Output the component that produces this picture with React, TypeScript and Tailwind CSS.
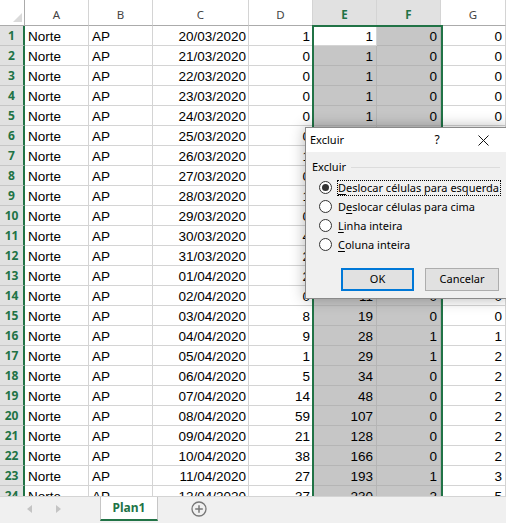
import React from "react";

type RowData = [string, number, number, number, number];

const data: RowData[] = [
  ["20/03/2020", 1, 1, 0, 0],
  ["21/03/2020", 0, 1, 0, 0],
  ["22/03/2020", 0, 1, 0, 0],
  ["23/03/2020", 0, 1, 0, 0],
  ["24/03/2020", 0, 1, 0, 0],
  ["25/03/2020", 0, 1, 0, 0],
  ["26/03/2020", 1, 2, 0, 0],
  ["27/03/2020", 0, 2, 0, 0],
  ["28/03/2020", 1, 3, 0, 0],
  ["29/03/2020", 0, 3, 0, 0],
  ["30/03/2020", 4, 7, 0, 0],
  ["31/03/2020", 2, 9, 0, 0],
  ["01/04/2020", 2, 11, 0, 0],
  ["02/04/2020", 0, 11, 0, 0],
  ["03/04/2020", 8, 19, 0, 0],
  ["04/04/2020", 9, 28, 1, 1],
  ["05/04/2020", 1, 29, 1, 2],
  ["06/04/2020", 5, 34, 0, 2],
  ["07/04/2020", 14, 48, 0, 2],
  ["08/04/2020", 59, 107, 0, 2],
  ["09/04/2020", 21, 128, 0, 2],
  ["10/04/2020", 38, 166, 0, 2],
  ["11/04/2020", 27, 193, 1, 3],
  ["12/04/2020", 37, 230, 2, 5],
];

const cell =
  "flex shrink-0 h-full items-start pt-[3px] leading-[16px] border-r border-b whitespace-nowrap overflow-hidden";
const plain = "bg-white border-[#d4d4d4]";
const picked = "bg-[#c6c6c6] border-[#b5b5b5]";

function SheetRow({ n, row }: { n: number; row: RowData }) {
  const [date, d, e, f, g] = row;
  return (
    <div className="flex h-[20px]">
      <div className="flex w-[25px] shrink-0 items-center justify-center border-b border-b-[#c6c6c6] border-r-2 border-r-[#217346] bg-[#e1e1e1] font-['Noto_Sans'] text-[12px] font-bold text-[#217346]">
        {n}
      </div>
      <div className={`${cell} ${plain} w-[64px] pl-[3px]`}>Norte</div>
      <div className={`${cell} ${plain} w-[64px] pl-[3px]`}>AP</div>
      <div className={`${cell} ${plain} w-[96px] justify-end pr-[2px]`}>{date}</div>
      <div className={`${cell} ${plain} w-[64px] justify-end pr-[2px]`}>{d}</div>
      <div className={`${cell} ${n === 1 ? plain : picked} w-[64px] justify-end pr-[3px]`}>{e}</div>
      <div className={`${cell} ${picked} w-[64px] justify-end pr-[3px]`}>{f}</div>
      <div className={`${cell} ${plain} w-[65px] justify-end pr-[3px]`}>{g}</div>
    </div>
  );
}

function HeaderRow() {
  const head =
    "flex shrink-0 h-full items-center justify-center pt-[5px] border-r border-b border-r-[#d4d4d4] border-b-[#ababab] font-['Noto_Sans'] text-[11.5px]";
  return (
    <div className="flex h-[26px]">
      <div className="relative w-[25px] shrink-0 border-b border-r border-[#ababab] bg-white">
        <svg className="absolute bottom-[3px] right-[2px]" width="9" height="9" viewBox="0 0 9 9">
          <polygon points="9,0 9,9 0,9" fill="#dadada" />
        </svg>
      </div>
      <div className={`${head} w-[64px] bg-white text-[#444]`}>A</div>
      <div className={`${head} w-[64px] bg-white text-[#444]`}>B</div>
      <div className={`${head} w-[96px] bg-white text-[#444]`}>C</div>
      <div className={`${head} w-[64px] bg-white text-[#444]`}>D</div>
      <div className={`${head} w-[64px] bg-[#e1e1e1] font-bold text-[#217346]`}>E</div>
      <div className={`${head} w-[64px] bg-[#e1e1e1] font-bold text-[#217346]`}>F</div>
      <div className={`${head} w-[65px] bg-white text-[#444]`}>G</div>
    </div>
  );
}

function Radio({ checked, children, focus }: { checked?: boolean; children: React.ReactNode; focus?: boolean }) {
  return (
    <div className="flex h-[19px] items-center whitespace-nowrap pl-[7px]">
      <span className="flex h-[13px] w-[13px] shrink-0 items-center justify-center rounded-full border border-[#333] bg-white">
        {checked && <span className="h-[7px] w-[7px] rounded-full bg-[#333]" />}
      </span>
      <span
        className={`ml-[5px] shrink-0 border pr-px leading-[14px] ${
          focus ? "border-dotted border-black" : "border-transparent"
        }`}
      >
        {children}
      </span>
    </div>
  );
}

function Dialog() {
  return (
    <div className="absolute left-[305px] top-[127px] h-[172px] w-[202px] border border-[#8a8a8a] bg-[#f0f0f0] font-['Noto_Sans'] text-[11px] text-black shadow-[0_0_14px_rgba(0,0,0,0.3)]">
      <div className="flex h-[24px] items-center bg-white">
        <span className="flex-1 pl-[4px]">Excluir</span>
        <span className="flex w-[46px] justify-center text-[12px]">?</span>
        <span className="flex w-[46px] justify-center">
          <svg width="11" height="11" viewBox="0 0 11 11">
            <path d="M0.5 0.5 L10.5 10.5 M10.5 0.5 L0.5 10.5" stroke="#111" strokeWidth="1" />
          </svg>
        </span>
      </div>
      <div className="px-[6px] pt-[8px]">
        <div className="flex h-[14px] items-center">
          <span>Excluir</span>
          <span className="ml-[5px] h-px flex-1 bg-[#dcdcdc]" />
        </div>
        <div className="mt-[4px]">
          <Radio checked focus>
            <span className="underline underline-offset-[2px]">D</span>eslocar células para esquerda
          </Radio>
          <Radio>
            D<span className="underline underline-offset-[2px]">e</span>slocar células para cima
          </Radio>
          <Radio>
            <span className="underline underline-offset-[2px]">L</span>inha inteira
          </Radio>
          <Radio>
            <span className="underline underline-offset-[2px]">C</span>oluna inteira
          </Radio>
        </div>
        <div className="mt-[14px] flex">
          <button className="ml-[29px] h-[23px] w-[73px] border-2 border-[#0078d7] bg-[#e1e1e1]">OK</button>
          <button className="ml-[11px] h-[23px] w-[74px] border border-[#adadad] bg-[#e1e1e1]">Cancelar</button>
        </div>
      </div>
    </div>
  );
}

function TabBar() {
  return (
    <div className="flex h-[27px] items-start border-t border-[#d4d4d4] bg-[#f0f0f0]">
      <div className="flex h-[24px] w-[100px] items-center">
        <svg className="ml-[27px]" width="5" height="8" viewBox="0 0 5 8">
          <polygon points="5,0 5,8 0,4" fill="#c4c4c4" />
        </svg>
        <svg className="ml-[24px]" width="5" height="8" viewBox="0 0 5 8">
          <polygon points="0,0 0,8 5,4" fill="#c4c4c4" />
        </svg>
      </div>
      <div className="flex h-[24px] w-[58px] items-center justify-center border-x border-b-2 border-x-[#c6c6c6] border-b-[#217346] bg-white font-['Noto_Sans'] text-[12px] font-bold text-[#217346]">
        Plan1
      </div>
      <div className="ml-[33px] flex h-[24px] items-center">
        <svg width="16" height="16" viewBox="0 0 16 16">
          <circle cx="8" cy="8" r="7" fill="none" stroke="#777" strokeWidth="1.3" />
          <path d="M8 4.2 V11.8 M4.2 8 H11.8" stroke="#777" strokeWidth="1.5" />
        </svg>
      </div>
    </div>
  );
}

export default function App() {
  return (
    <div className="flex h-[523px] w-[506px] flex-col overflow-hidden bg-white">
      <div className="relative h-[496px] shrink-0 overflow-hidden font-['Liberation_Sans'] text-[13.5px] text-black">
        <HeaderRow />
        {data.map((row, i) => (
          <SheetRow key={i} n={i + 1} row={row} />
        ))}
        <div className="pointer-events-none absolute left-[312px] top-[25px] h-[500px] w-[131px] border-2 border-[#217346]" />
        <Dialog />
      </div>
      <TabBar />
    </div>
  );
}
